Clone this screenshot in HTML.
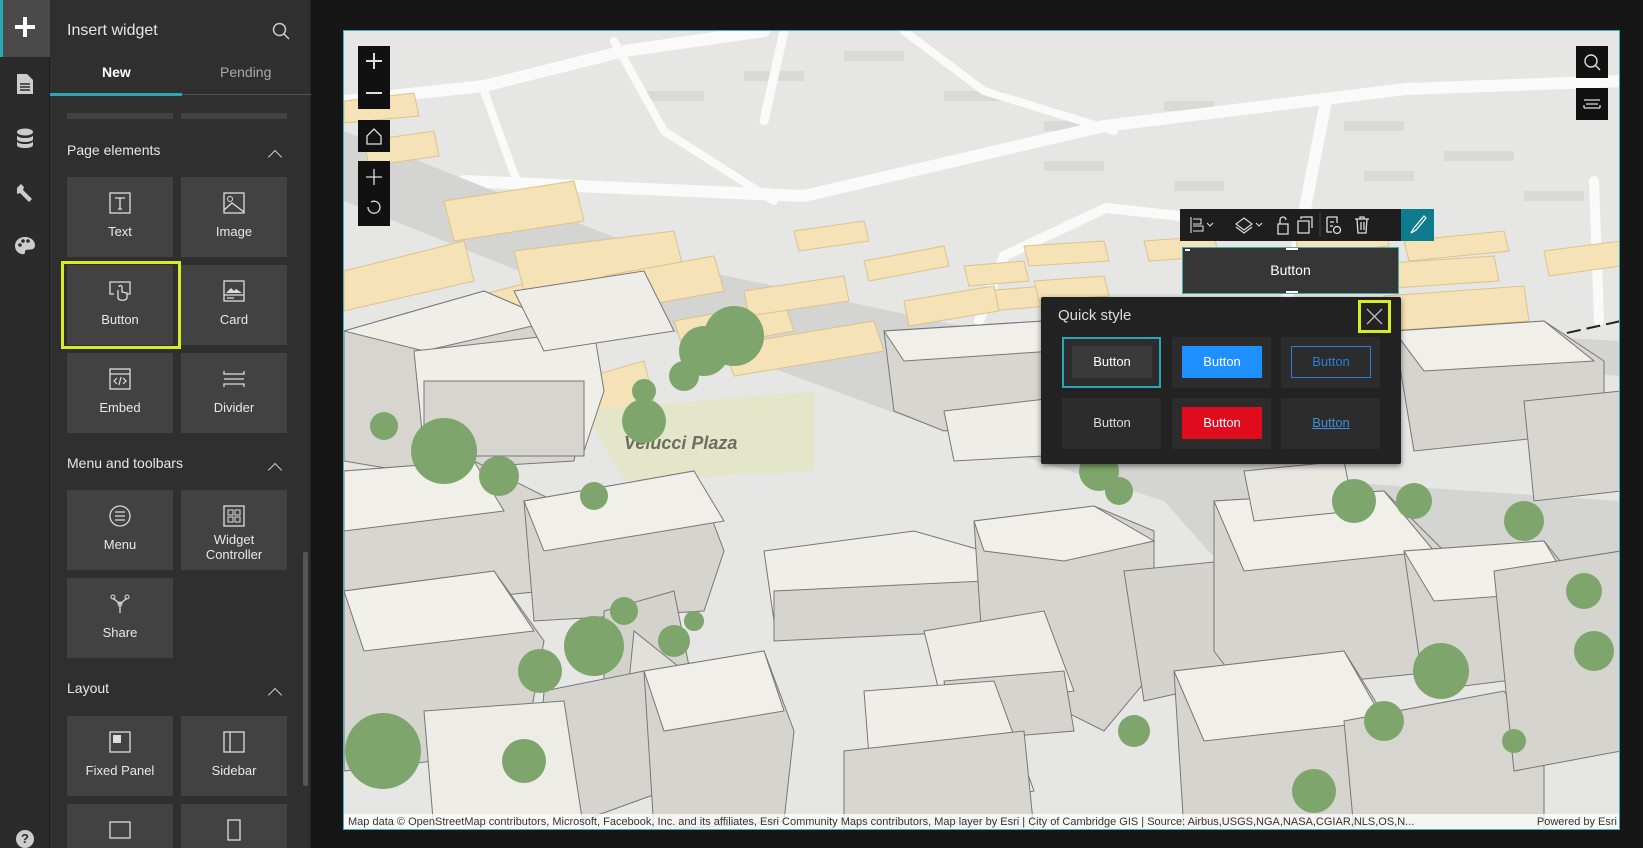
<!DOCTYPE html>
<html><head><meta charset="utf-8"><style>
*{box-sizing:border-box;margin:0;padding:0}
body{width:1643px;height:848px;background:#161616;font-family:"Liberation Sans",sans-serif;overflow:hidden;position:relative;color:#e0e0e0}
.abs{position:absolute}
#rail{left:0;top:0;width:50px;height:848px;background:#2b2b2b;border-right:1px solid #1d1d1d}
#panel{left:50px;top:0;width:261px;height:848px;background:#2f2f2f;border-right:1px solid #222}
.tile{position:absolute;width:106px;height:80px;background:#424242;color:#e8e8e8;font-size:13px;text-align:center}
.tile svg{position:absolute;left:42px;top:15px}
.tile span{position:absolute;left:0;right:0;top:47px}
.sec{position:absolute;left:17px;font-size:14px;color:#e8e8e8}
.chev{position:absolute;left:220px;width:10px;height:10px;border-left:1.5px solid #ccc;border-top:1.5px solid #ccc;transform:rotate(45deg)}
.mc{position:absolute;width:32px;background:#111;}
.qs{position:absolute;width:99px;height:51px;background:#2c2c2c}
.qs div{position:absolute;left:10px;top:9px;width:80px;height:32px;font-size:13px;text-align:center;line-height:32px}
</style></head><body>
<div id="rail" class="abs">
 <div class="abs" style="left:0;top:0;width:50px;height:57px;background:#4a4a4a;border-left:3px solid #2aa7b6"></div>
 <div class="abs" style="left:15px;top:25px;width:20px;height:4px;background:#fff"></div>
 <div class="abs" style="left:23px;top:17px;width:4px;height:20px;background:#fff"></div>
 <svg class="abs" style="left:15px;top:73px" width="20" height="22"><path d="M2 1h10l6 6v14H2z" fill="#ccc"/><path d="M5 11h10M5 14h10M5 17h10" stroke="#2b2b2b" stroke-width="1.5"/></svg>
 <svg class="abs" style="left:15px;top:128px" width="20" height="22"><ellipse cx="10" cy="4" rx="8" ry="3.5" fill="#ccc"/><path d="M2 7c0 4 16 4 16 0v4c0 4-16 4-16 0zM2 13c0 4 16 4 16 0v4c0 4-16 4-16 0z" fill="#ccc"/></svg>
 <svg class="abs" style="left:14px;top:182px" width="22" height="22"><path d="M3 6l4-4 3 3-1 3 9 9-3 3-9-9-3 1z" fill="#ccc"/></svg>
 <svg class="abs" style="left:14px;top:236px" width="22" height="20"><path d="M11 1C4 1 1 6 1 10c0 6 6 9 9 8 2-1 0-3 2-4 3-1 9 1 9-5 0-4-4-8-10-8z" fill="#ccc"/><circle cx="6" cy="9" r="1.8" fill="#2b2b2b"/><circle cx="9" cy="5" r="1.8" fill="#2b2b2b"/><circle cx="14" cy="5" r="1.8" fill="#2b2b2b"/></svg>
 <div class="abs" style="left:16px;top:830px;width:18px;height:18px;border-radius:9px;background:#ccc;color:#2b2b2b;font-size:13px;font-weight:bold;text-align:center;line-height:18px">?</div>
</div>
<div id="panel" class="abs">
 <div class="abs" style="left:17px;top:22px;font-size:16px;color:#e6e6e6">Insert widget</div>
 <svg class="abs" style="left:222px;top:22px" width="18" height="18"><circle cx="7.5" cy="7.5" r="6" fill="none" stroke="#ccc" stroke-width="1.5"/><path d="M12 12l5 5" stroke="#ccc" stroke-width="1.5"/></svg>
 <div class="abs" style="left:52px;top:64px;font-size:14px;font-weight:bold;color:#fff">New</div>
 <div class="abs" style="left:170px;top:64px;font-size:14px;color:#aaa">Pending</div>
 <div class="abs" style="left:0;top:94px;width:261px;height:1px;background:#555"></div>
 <div class="abs" style="left:0;top:93px;width:132px;height:3px;background:#2aa7b6"></div>
 <div class="abs" style="left:17px;top:113px;width:106px;height:6px;background:#424242"></div>
 <div class="abs" style="left:131px;top:113px;width:106px;height:6px;background:#424242"></div>
 <div class="sec" style="top:142px">Page elements</div><div class="chev" style="top:152px"></div>
 <div class="tile" style="left:17px;top:177px"><svg width="22" height="22"><rect x="1" y="1" width="20" height="20" fill="none" stroke="#ddd" stroke-width="1.3"/><path d="M6 6h10M11 6v11M9 17h4" stroke="#ddd" stroke-width="1.3" fill="none"/></svg><span>Text</span></div>
 <div class="tile" style="left:131px;top:177px"><svg width="22" height="22"><rect x="1" y="1" width="20" height="20" fill="none" stroke="#ddd" stroke-width="1.3"/><circle cx="7" cy="7" r="2.5" fill="none" stroke="#ddd"/><path d="M1 18l8-7 12 9" stroke="#ddd" stroke-width="1.3" fill="none"/></svg><span>Image</span></div>
 <div class="tile" style="left:17px;top:265px"><svg width="22" height="22"><path d="M5 14H1V2h20v12h-3" fill="none" stroke="#ddd" stroke-width="1.3"/><path d="M9 10v8c1 3 8 3 9 0v-5l-5-1v-5c0-2-3-2-3 0" fill="none" stroke="#ddd" stroke-width="1.3"/></svg><span>Button</span></div>
 <div class="abs" style="left:11px;top:261px;width:120px;height:88px;border:3px solid #d7ec22"></div>
 <div class="tile" style="left:131px;top:265px"><svg width="22" height="22"><rect x="1" y="1" width="20" height="20" fill="none" stroke="#ddd" stroke-width="1.3"/><path d="M3 13l5-5 3 3 2-2 6 4z" fill="#ddd"/><path d="M1 15h20M4 18h7" stroke="#ddd" stroke-width="1.3"/></svg><span>Card</span></div>
 <div class="tile" style="left:17px;top:353px"><svg width="22" height="22"><rect x="1" y="1" width="20" height="20" fill="none" stroke="#ddd" stroke-width="1.3"/><path d="M1 6h20M8 10l-3 3 3 3M14 10l3 3-3 3M12 9l-2 8" stroke="#ddd" stroke-width="1.2" fill="none"/></svg><span>Embed</span></div>
 <div class="tile" style="left:131px;top:353px"><svg width="22" height="22"><path d="M1 3v3h20V3M1 19v-3h20v3M1 11h20" stroke="#ddd" stroke-width="1.3" fill="none"/></svg><span>Divider</span></div>
 <div class="sec" style="top:455px">Menu and toolbars</div><div class="chev" style="top:465px"></div>
 <div class="tile" style="left:17px;top:490px"><svg width="22" height="22"><circle cx="11" cy="11" r="10" fill="none" stroke="#ddd" stroke-width="1.3"/><path d="M6 7h10M6 11h10M6 15h10" stroke="#ddd" stroke-width="1.3"/></svg><span>Menu</span></div>
 <div class="tile" style="left:131px;top:490px"><svg width="22" height="22"><rect x="1" y="1" width="20" height="20" fill="none" stroke="#ddd" stroke-width="1.3"/><rect x="5" y="5" width="5" height="5" fill="none" stroke="#ddd"/><rect x="12" y="5" width="5" height="5" fill="none" stroke="#ddd"/><rect x="5" y="12" width="5" height="5" fill="none" stroke="#ddd"/><rect x="12" y="12" width="5" height="5" fill="none" stroke="#ddd"/></svg><span style="top:42px;line-height:15px">Widget<br>Controller</span></div>
 <div class="tile" style="left:17px;top:578px"><svg width="22" height="22"><path d="M11 20V11M11 11L4 5M11 11l7-6" stroke="#ddd" stroke-width="1.3" fill="none"/><circle cx="11" cy="11" r="2" fill="none" stroke="#ddd"/><circle cx="4" cy="4" r="2" fill="none" stroke="#ddd"/><circle cx="18" cy="4" r="2" fill="none" stroke="#ddd"/></svg><span>Share</span></div>
 <div class="sec" style="top:680px">Layout</div><div class="chev" style="top:690px"></div>
 <div class="tile" style="left:17px;top:716px"><svg width="22" height="22"><rect x="1" y="1" width="20" height="20" fill="none" stroke="#ddd" stroke-width="1.3"/><rect x="4" y="4" width="8" height="8" fill="#ddd"/></svg><span>Fixed Panel</span></div>
 <div class="tile" style="left:131px;top:716px"><svg width="22" height="22"><rect x="1" y="1" width="20" height="20" fill="none" stroke="#ddd" stroke-width="1.3"/><path d="M7 1v20" stroke="#ddd" stroke-width="1.3"/></svg><span>Sidebar</span></div>
 <div class="tile" style="left:17px;top:804px;height:44px"><svg width="22" height="22"><rect x="1" y="3" width="20" height="16" fill="none" stroke="#ddd" stroke-width="1.3"/></svg></div>
 <div class="tile" style="left:131px;top:804px;height:44px"><svg width="22" height="22"><rect x="5" y="1" width="12" height="20" fill="none" stroke="#ddd" stroke-width="1.3"/></svg></div>
 <div class="abs" style="left:253px;top:552px;width:5px;height:234px;background:#555;border-radius:2px"></div>
</div>

<div class="abs" style="left:343px;top:30px;width:1277px;height:800px;border:1px solid #3bb3c3;overflow:hidden;background:#e5e5e3">
<svg width="1277" height="800" style="position:absolute;left:0;top:0">
 <rect width="1277" height="800" fill="#e6e6e4"/>
 <!-- grey blocks -->
 <g fill="#d9d9d7">
  <rect x="600" y="60" width="60" height="10"/><rect x="700" y="90" width="70" height="10"/><rect x="820" y="70" width="50" height="10"/>
  <rect x="1000" y="90" width="60" height="10"/><rect x="1100" y="120" width="70" height="10"/><rect x="1020" y="140" width="50" height="10"/>
  <rect x="700" y="130" width="60" height="10"/><rect x="830" y="150" width="50" height="10"/><rect x="1180" y="160" width="60" height="10"/>
  <rect x="400" y="40" width="60" height="10"/><rect x="300" y="60" width="60" height="10"/><rect x="500" y="20" width="60" height="10"/>
 </g>
 <!-- white roads -->
 <g stroke="#fafafa" fill="none" stroke-linecap="round">
  <path d="M0 70L140 55L280 20L420 0" stroke-width="12"/>
  <path d="M120 150L460 165L760 95L1062 58L1277 50" stroke-width="12"/>
  <path d="M982 70L939 290" stroke-width="12"/>
  <path d="M762 177L955 198" stroke-width="10"/>
  <path d="M762 177L660 225L635 290" stroke-width="10"/>
  <path d="M560 0L640 60L770 100" stroke-width="8"/>
  <path d="M440 0L420 90" stroke-width="9"/>
  <path d="M270 10L320 100L430 170" stroke-width="8"/>
  <path d="M1250 150L1255 290" stroke-width="10"/>
  <path d="M140 60L180 170L230 210" stroke-width="8"/>
 </g>
 <!-- grey main road -->
 <path d="M0 100L0 170L300 290L600 400L820 470L900 560L1000 520L1277 560L1277 470L980 450L940 380L900 340L650 330L640 300L360 240L150 160Z" fill="#d4d4d2"/>
 <path d="M900 290L1277 310L1277 345L900 320Z" fill="#d4d4d2"/>
 <!-- beige footprints -->
 <g fill="#f5e2b6" stroke="#dcc38c">
  <path d="M0 300L190 250L200 290L0 350Z"/><path d="M0 240L120 210L130 250L0 280Z"/>
  <path d="M0 70L70 62L75 85L0 92Z"/><path d="M20 110L90 100L95 125L25 135Z"/>
  <path d="M0 390L180 330L190 370L0 420Z"/><path d="M160 370L300 330L310 370L170 410Z"/>
  <path d="M100 170L230 150L240 190L110 210Z"/><path d="M170 220L330 200L340 240L180 260Z"/>
  <path d="M260 245L370 225L380 260L270 280Z"/><path d="M330 290L440 270L450 300L340 320Z"/>
  <path d="M400 260L500 245L505 270L405 285Z"/><path d="M380 315L530 290L540 320L390 345Z"/>
  <path d="M450 200L520 190L525 210L455 220Z"/><path d="M520 230L600 215L605 235L525 250Z"/>
  <path d="M640 260L700 255L705 275L645 280Z"/><path d="M560 270L650 255L655 280L565 295Z"/>
  <path d="M660 300L780 290L790 310L670 320Z"/><path d="M620 235L680 230L685 250L625 255Z"/>
  <path d="M950 200L1040 190L1045 215L955 225Z"/><path d="M1060 210L1160 200L1165 220L1065 230Z"/>
  <path d="M1000 235L1150 225L1155 250L1005 260Z"/><path d="M1200 220L1277 210L1277 235L1205 245Z"/>
  <path d="M1040 265L1180 255L1185 290L1045 300Z"/><path d="M800 210L870 205L875 225L805 230Z"/>
  <path d="M680 215L760 210L765 230L685 235Z"/><path d="M690 250L760 245L765 265L695 270Z"/>
 </g>
 <path d="M600 330L700 330L780 400L1277 290" stroke="#222" stroke-width="2" stroke-dasharray="14 6" fill="none"/>
 <!-- plaza -->
 <path d="M240 380L470 360L470 440L280 450Z" fill="#e3e6c8"/>
 <text x="280" y="418" font-family="Liberation Sans" font-weight="bold" font-style="italic" font-size="18" fill="#6e6e60">Velucci Plaza</text>
 <!-- buildings -->
 <g stroke="#777" stroke-width="1">
  <path d="M0 300L140 260L210 290L240 370L230 430L60 440L0 430Z" fill="#d7d5d0"/>
  <path d="M0 300L140 260L210 290L80 320Z" fill="#f0eee9"/>
  <path d="M70 320L250 300L260 360L240 420L80 420Z" fill="#f0eee9"/>
  <path d="M80 350L240 350L240 425L80 425Z" fill="#d7d5d0"/>
  <path d="M170 260L300 240L330 300L200 320Z" fill="#efede8"/>
  <path d="M0 440L130 430L210 470L200 560L0 580Z" fill="#d8d6d1"/>
  <path d="M0 440L130 430L160 480L0 500Z" fill="#f1efea"/>
  <path d="M180 470L350 440L380 520L360 580L190 590Z" fill="#d6d4cf"/>
  <path d="M180 470L350 440L380 490L200 520Z" fill="#f1efea"/>
  <path d="M0 560L150 540L200 610L180 720L0 740Z" fill="#d6d4cf"/>
  <path d="M0 560L150 540L190 600L20 620Z" fill="#f2f0eb"/>
  <path d="M260 580L330 560L350 660L290 690L260 660Z" fill="#d4d2cd"/>
  <path d="M290 600L340 640L330 720L280 700Z" fill="#e2e0db"/>
  <path d="M200 660L300 640L320 760L210 800L190 800Z" fill="#d6d4cf"/>
  <path d="M80 680L220 670L240 800L90 800Z" fill="#eeece7"/>
  <path d="M540 300L700 290L720 380L600 400L550 380Z" fill="#d8d6d1"/>
  <path d="M540 300L700 290L710 320L560 330Z" fill="#f1efea"/>
  <path d="M600 380L770 360L790 420L610 430Z" fill="#efede8"/>
  <path d="M420 520L570 500L640 520L640 580L430 590Z" fill="#f0eee9"/>
  <path d="M430 560L640 550L640 600L430 610Z" fill="#d6d4cf"/>
  <path d="M630 490L750 475L810 500L810 640L760 700L640 640Z" fill="#d6d4cf"/>
  <path d="M630 490L750 475L810 510L720 530L640 520Z" fill="#f1efea"/>
  <path d="M780 540L880 530L890 650L800 670Z" fill="#d5d3ce"/>
  <path d="M580 600L700 580L730 660L600 680Z" fill="#efede8"/>
  <path d="M600 650L720 640L730 700L610 710Z" fill="#d6d4cf"/>
  <path d="M300 640L420 620L450 700L440 790L310 800Z" fill="#d6d4cf"/>
  <path d="M300 640L420 620L440 680L320 700Z" fill="#f1efea"/>
  <path d="M520 660L650 650L690 760L530 790Z" fill="#f0eee9"/>
  <path d="M500 720L680 700L690 800L500 800Z" fill="#d8d6d1"/>
  <path d="M870 470L1040 460L1100 520L1100 640L900 660L870 620Z" fill="#d6d4cf"/>
  <path d="M870 470L1040 460L1090 520L900 540Z" fill="#f1efea"/>
  <path d="M1060 520L1200 510L1240 560L1240 640L1080 660Z" fill="#d6d4cf"/>
  <path d="M1060 520L1200 510L1230 560L1090 570Z" fill="#f2f0eb"/>
  <path d="M830 640L1000 620L1050 700L1050 800L840 800Z" fill="#d6d4cf"/>
  <path d="M830 640L1000 620L1040 690L860 710Z" fill="#f1efea"/>
  <path d="M1000 690L1160 660L1200 720L1200 800L1010 800Z" fill="#d7d5d0"/>
  <path d="M1150 540L1277 520L1277 720L1170 740Z" fill="#d6d4cf"/>
  <path d="M1050 300L1200 290L1260 330L1260 400L1070 420Z" fill="#d6d4cf"/>
  <path d="M1050 300L1200 290L1250 330L1080 340Z" fill="#f1efea"/>
  <path d="M1180 370L1277 360L1277 460L1190 470Z" fill="#d8d6d1"/>
  <path d="M900 440L1000 430L1010 480L910 490Z" fill="#e9e7e2"/>
 </g>
 <!-- trees -->
 <g fill="#7ea56b">
  <circle cx="360" cy="320" r="25"/><circle cx="390" cy="305" r="30"/><circle cx="340" cy="345" r="15"/><circle cx="300" cy="360" r="12"/>
  <circle cx="300" cy="390" r="22"/><circle cx="100" cy="420" r="33"/><circle cx="40" cy="395" r="14"/><circle cx="155" cy="445" r="20"/>
  <circle cx="250" cy="465" r="14"/><circle cx="250" cy="615" r="30"/><circle cx="196" cy="640" r="22"/><circle cx="280" cy="580" r="14"/>
  <circle cx="39" cy="720" r="38"/><circle cx="180" cy="730" r="22"/><circle cx="330" cy="610" r="16"/><circle cx="350" cy="590" r="10"/>
  <circle cx="755" cy="440" r="20"/><circle cx="775" cy="460" r="14"/><circle cx="1010" cy="470" r="22"/><circle cx="1070" cy="470" r="18"/>
  <circle cx="1180" cy="490" r="20"/><circle cx="1097" cy="640" r="28"/><circle cx="1040" cy="690" r="20"/><circle cx="790" cy="700" r="16"/>
  <circle cx="1170" cy="710" r="12"/><circle cx="1250" cy="620" r="20"/><circle cx="970" cy="760" r="22"/><circle cx="1240" cy="560" r="18"/>
 </g>
</svg>
 <div class="mc" style="left:14px;top:15px;height:63px"><div style="position:absolute;left:8px;top:14px;width:16px;height:1.5px;background:#ddd"></div><div style="position:absolute;left:15px;top:7px;width:1.5px;height:16px;background:#ddd"></div><div style="position:absolute;left:8px;top:46px;width:16px;height:1.5px;background:#ddd"></div></div>
 <div class="mc" style="left:14px;top:89px;height:32px"><svg width="32" height="32"><path d="M9 16L16 9l7 7v8H9z" fill="none" stroke="#ddd" stroke-width="1.3"/></svg></div>
 <div class="mc" style="left:14px;top:130px;height:65px"><svg width="32" height="65"><path d="M16 8v16M8 16h16" stroke="#ddd" stroke-width="1.3"/><path d="M10 46a6 6 0 1 0 3-5" fill="none" stroke="#ddd" stroke-width="1.3"/></svg></div>
 <div class="mc" style="left:1232px;top:15px;height:32px"><svg width="32" height="32"><circle cx="15" cy="15" r="6" fill="none" stroke="#ddd" stroke-width="1.4"/><path d="M19 19l5 5" stroke="#ddd" stroke-width="1.4"/></svg></div>
 <div class="mc" style="left:1232px;top:57px;height:32px"><svg width="32" height="32"><path d="M8 12h16M8 20h16M10 16h12M8 20v-3M24 20v-3" stroke="#ddd" stroke-width="1.3" fill="none"/></svg></div>
 <div class="abs" style="left:0;top:783px;width:1277px;height:17px;background:rgba(255,255,255,.75);font-size:11px;color:#333;line-height:17px;padding-left:4px;white-space:nowrap">Map data © OpenStreetMap contributors, Microsoft, Facebook, Inc. and its affiliates, Esri Community Maps contributors, Map layer by Esri | City of Cambridge GIS | Source: Airbus,USGS,NGA,NASA,CGIAR,NLS,OS,N...<span style="position:absolute;right:4px">Powered by Esri</span></div>
</div>

<!-- toolbar -->
<div class="abs" style="left:1180px;top:209px;width:254px;height:32px;background:#1e1e1e">
 <svg width="254" height="32"><g stroke="#ddd" stroke-width="1.3" fill="none">
  <path d="M11 8v16M13 10h8v5h-8M13 17h10v5H13M27 14l3 3 3-3" stroke-width="1.1"/>
  <path d="M64 9l8 6-8 6-8-6zM56 18l8 6 8-6M76 14l3 3 3-3" stroke-width="1.1"/>
  <path d="M98 15h10v10H98zM100 15v-4a3 3 0 0 1 6 0"/>
  <path d="M121 10v-2h11v11M118 12h11v12h-11z"/>
  <path d="M147 8h10v6M147 8v15h5M150 13h4M150 17h3"/><circle cx="157" cy="21" r="3.5"/>
  <path d="M175 10h14M180 10V8h4v2M177 10l1 14h8l1-14M181 13v8M184 13v8"/>
 </g>
 <rect x="221" y="0" width="33" height="32" fill="#0e7c8c"/>
 <path d="M244 7l-10 12-3 5 5-3 10-12z" stroke="#fff" stroke-width="1.2" fill="none"/>
 <line x1="140" y1="4" x2="140" y2="28" stroke="#444"/></svg>
</div>
<div class="abs" style="left:1182px;top:247px;width:217px;height:47px;background:#363636;border:1px solid #4aa;color:#fff;font-size:14px;text-align:center;line-height:45px">Button</div>
<div class="abs" style="left:1185px;top:249px;width:5px;height:2px;background:#fff"></div>
<div class="abs" style="left:1286px;top:248px;width:12px;height:2px;background:#fff"></div>
<div class="abs" style="left:1286px;top:291px;width:12px;height:2px;background:#fff"></div>
<!-- quick style -->
<div class="abs" style="left:1041px;top:297px;width:360px;height:167px;background:#222;border-radius:2px;box-shadow:0 2px 6px rgba(0,0,0,.5)">
 <div class="abs" style="left:17px;top:10px;font-size:15px;color:#ddd">Quick style</div>
 <div class="abs" style="left:317px;top:3px;width:33px;height:33px;border:3px solid #d7ec22"><svg width="27" height="27"><path d="M6 6l15 15M21 6L6 21" stroke="#bbb" stroke-width="1.3"/></svg></div>
 <div class="qs" style="left:21px;top:40px;border:2px solid #2aa7b6"><div style="background:#3a3a3a;color:#fff;left:8px;top:7px">Button</div></div>
 <div class="qs" style="left:131px;top:40px"><div style="background:#1e90ff;color:#fff">Button</div></div>
 <div class="qs" style="left:240px;top:40px"><div style="border:1px solid #2a7fd0;color:#2a7fd0;line-height:30px">Button</div></div>
 <div class="qs" style="left:21px;top:101px"><div style="color:#ddd">Button</div></div>
 <div class="qs" style="left:131px;top:101px"><div style="background:#e00b1c;color:#fff">Button</div></div>
 <div class="qs" style="left:240px;top:101px"><div style="color:#3a8fe0;text-decoration:underline">Button</div></div>
</div>
</body></html>
